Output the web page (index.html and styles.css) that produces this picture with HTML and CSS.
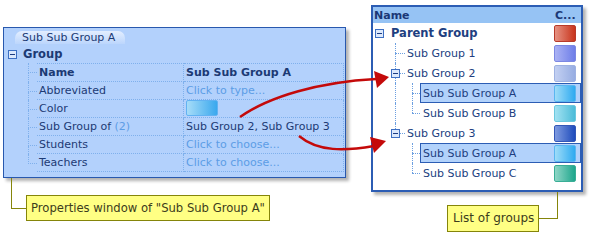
FILE: index.html
```html
<html>

<head>
    <meta http-equiv="Content-Type" content="text/html; charset=UTF-8">
    <title>Groups</title>
    <link rel="stylesheet" href="styles.css">
</head>

<body>
    <div class="page">

        <!-- properties window -->
        <div class="col-left">
            <div class="props">
                <div class="tabs"><span class="tab">Sub Sub Group A</span></div>
                <div class="group-head">
                    <svg class="exp" width="9" height="9"><rect x="0.5" y="0.5" width="8" height="8" fill="#dce9fc" stroke="#3d6fc2"/><path d="M2 4.5h5" stroke="#1c3c82"/></svg>
                    <b>Group</b>
                </div>
                <div class="grid">
                    <div class="row head">
                        <span class="branch"><i></i><i></i></span>
                        <span class="key">Name</span>
                        <span class="val">Sub Sub Group A</span>
                    </div>
                    <div class="row">
                        <span class="branch"><i></i><i></i></span>
                        <span class="key">Abbreviated</span>
                        <span class="val hint">Click to type...</span>
                    </div>
                    <div class="row">
                        <span class="branch"><i></i><i></i></span>
                        <span class="key">Color</span>
                        <span class="val"><span class="chip"></span></span>
                    </div>
                    <div class="row">
                        <span class="branch"><i></i><i></i></span>
                        <span class="key">Sub Group of <span class="hint">(2)</span></span>
                        <span class="val">Sub Group 2, Sub Group 3</span>
                    </div>
                    <div class="row">
                        <span class="branch"><i></i><i></i></span>
                        <span class="key">Students</span>
                        <span class="val hint">Click to choose...</span>
                    </div>
                    <div class="row last">
                        <span class="branch"><i></i><i></i></span>
                        <span class="key">Teachers</span>
                        <span class="val hint">Click to choose...</span>
                    </div>
                </div>
            </div>
            <div class="callout-l">
                <span class="wire-l"></span>
                <span class="note">Properties window of "Sub Sub Group A"</span>
            </div>
        </div>

        <!-- list of groups -->
        <div class="col-right">
            <div class="tree">
                <div class="tree-head"><span class="h-name">Name</span><span class="h-col">C...</span></div>

                <div class="node">
                    <span class="g g0"><svg class="exp" width="9" height="9"><rect x="0.5" y="0.5" width="8" height="8" fill="#dce9fc" stroke="#3d6fc2"/><path d="M2 4.5h5" stroke="#1c3c82"/></svg></span>
                    <span class="item l0"><b class="label">Parent Group</b><span class="sw red"></span></span>
                </div>
                <div class="node">
                    <span class="g g0"></span><span class="g g1 tee"></span>
                    <span class="item l1"><span class="label">Sub Group 1</span><span class="sw violet"></span></span>
                </div>
                <div class="node">
                    <span class="g g0"></span><span class="g g1 tee"><svg class="exp" width="9" height="9"><rect x="0.5" y="0.5" width="8" height="8" fill="#dce9fc" stroke="#3d6fc2"/><path d="M2 4.5h5" stroke="#1c3c82"/></svg></span>
                    <span class="item l1"><span class="label">Sub Group 2</span><span class="sw lilac"></span></span>
                </div>
                <div class="node">
                    <span class="g g0"></span><span class="g g1 pipe"></span><span class="g g2 tee"></span>
                    <span class="item sel"><span class="label">Sub Sub Group A</span><span class="sw sky"></span></span>
                </div>
                <div class="node">
                    <span class="g g0"></span><span class="g g1 pipe"></span><span class="g g2 ell"></span>
                    <span class="item"><span class="label">Sub Sub Group B</span><span class="sw cyan"></span></span>
                </div>
                <div class="node">
                    <span class="g g0"></span><span class="g g1 ell"><svg class="exp" width="9" height="9"><rect x="0.5" y="0.5" width="8" height="8" fill="#dce9fc" stroke="#3d6fc2"/><path d="M2 4.5h5" stroke="#1c3c82"/></svg></span>
                    <span class="item l1"><span class="label">Sub Group 3</span><span class="sw blue"></span></span>
                </div>
                <div class="node">
                    <span class="g g0"></span><span class="g g1"></span><span class="g g2 tee"></span>
                    <span class="item sel"><span class="label">Sub Sub Group A</span><span class="sw sky"></span></span>
                </div>
                <div class="node">
                    <span class="g g0"></span><span class="g g1"></span><span class="g g2 ell"></span>
                    <span class="item"><span class="label">Sub Sub Group C</span><span class="sw teal"></span></span>
                </div>
            </div>
            <div class="callout-r">
                <span class="note small">List of groups</span>
                <span class="wire-r"></span>
            </div>
        </div>

        <!-- arrows over both windows -->
        <svg class="arrows" width="590" height="250">
            <path d="M240 117 C270 96 320 82 376 79" fill="none" stroke="#c40a0a" stroke-width="2.4"/>
            <polygon points="389,77 374,71 377,88" fill="#c40a0a"/>
            <path d="M299 136 C318 152 345 151 374 146" fill="none" stroke="#c40a0a" stroke-width="2.4"/>
            <polygon points="386,141 370,137 374,153" fill="#c40a0a"/>
        </svg>
    </div>
</body>

</html>
```

FILE: styles.css
```css
* {
    margin: 0;
    padding: 0;
    box-sizing: border-box;
}

body {
    background: #fff;
    font-family: "DejaVu Sans", Verdana, sans-serif;
    font-size: 11px;
    color: #1c3a74;
}

.page {
    position: relative;
    display: flex;
    align-items: flex-start;
    padding-left: 3px;
    width: 590px;
    height: 250px;
}

/* properties window */
.col-left {
    width: 343px;
    margin-top: 27px;
}

.props {
    height: 151px;
    border: 1px solid #2858ae;
    background: #b3d1fc;
    box-shadow: 3px 3px 3px rgba(0, 0, 0, 0.3);
}

.tabs {
    height: 17px;
    padding: 3px 0 0 11px;
}

.tab {
    display: inline-block;
    height: 13px;
    line-height: 13px;
    padding: 0 10px 0 7px;
    border-radius: 7px 7px 0 0;
    background: linear-gradient(#e3eeff, #bcd6fc);
}

.group-head {
    height: 18px;
    display: flex;
    align-items: center;
    padding-left: 4px;
    gap: 6px;
    font-size: 11.5px;
}

.exp {
    display: block;
    flex: none;
}

.grid {
    margin-left: 24px;
}

.row {
    display: flex;
    height: 18px;
}

.row.head {
    height: 19px;
}

.row.head .key,
.row.head .val {
    border-top: 1px dotted #7fb0ec;
    font-weight: bold;
}

.branch {
    width: 9px;
    display: flex;
    flex-direction: column;
}

.branch i {
    flex: 1;
    border-left: 1px dotted #7fb0ec;
}

.branch i:first-child {
    border-bottom: 1px dotted #7fb0ec;
}

.row.last .branch i:last-child {
    border-left: none;
}

.key,
.val {
    display: block;
    line-height: 17px;
    border-bottom: 1px dotted #7fb0ec;
    border-right: 1px dotted #7fb0ec;
    white-space: nowrap;
}

.key {
    width: 147px;
    padding-left: 2px;
}

.val {
    width: 160px;
    padding-left: 2px;
}

.hint {
    color: #5c9de6;
}

.chip {
    display: block;
    width: 32px;
    height: 16px;
    border: 1px solid #62b2f2;
    border-radius: 2px;
    background: linear-gradient(90deg, #a6dcf8, #3aa8ee);
}

.callout-l {
    display: flex;
    align-items: flex-start;
    margin-left: 8px;
}

.wire-l {
    width: 15px;
    height: 31px;
    border-left: 1px solid #85850a;
    border-bottom: 1px solid #85850a;
}

.note {
    margin-top: 17px;
    height: 26px;
    line-height: 24px;
    padding: 0 4px;
    border: 1px solid #85850a;
    background: #ffff84;
    color: #3c3c1c;
    font-size: 11.6px;
    white-space: nowrap;
}

/* list of groups */
.col-right {
    width: 212px;
    margin-left: 25px;
    margin-top: 5px;
}

.tree {
    height: 187px;
    border: 2px solid #2c5db4;
    background: #fff;
    box-shadow: 3px 3px 3px rgba(0, 0, 0, 0.3);
    color: #203e80;
}

.tree-head {
    height: 16px;
    display: flex;
    align-items: center;
    background: #96c3f4;
    font-weight: bold;
    color: #1b3876;
}

.h-name {
    flex: 1;
    padding-left: 1px;
}

.h-col {
    width: 27px;
    padding-left: 1px;
}

.node {
    display: flex;
    height: 20px;
}

.g {
    position: relative;
    flex: none;
    display: flex;
    align-items: center;
}

.g0 {
    width: 14px;
    padding-left: 2px;
}

.g1 {
    width: 16px;
    padding-left: 4px;
}

.g2 {
    width: 17px;
}

.g .exp {
    position: relative;
    z-index: 1;
}

/* dotted tree lines */
.g.pipe::before,
.g.tee::before,
.g.ell::before {
    content: "";
    position: absolute;
    top: 0;
    bottom: 0;
    left: 8px;
    border-left: 1px dotted #6c9fe0;
}

.g.ell::before {
    bottom: 10px;
}

.g.tee::after,
.g.ell::after {
    content: "";
    position: absolute;
    top: 10px;
    left: 8px;
    right: -2px;
    border-top: 1px dotted #6c9fe0;
}

.g2.pipe::before,
.g2.tee::before,
.g2.ell::before,
.g2.tee::after,
.g2.ell::after {
    left: 9px;
}

.g2.tee::after,
.g2.ell::after {
    right: 0;
}

.item {
    flex: 1;
    display: flex;
    align-items: center;
    border: 1px solid transparent;
    padding: 0 4px 0 2px;
}

.item.l0 {
    padding-left: 3px;
}

.item.l1 {
    padding-left: 3px;
}

.item.sel {
    background: #b2d2fb;
    border-color: #2c5db4;
}

.label {
    flex: 1;
    white-space: nowrap;
}

b.label {
    font-size: 11.5px;
}

.sw {
    width: 22px;
    height: 17px;
    border-radius: 2px;
}

.red { background: linear-gradient(90deg, #e69282, #c8341c); border: 1px solid #b83a2a; }
.violet { background: linear-gradient(90deg, #aab2f4, #6e7ee8); border: 1px solid #7c88e2; }
.lilac { background: linear-gradient(90deg, #c3d0f2, #97ade2); border: 1px solid #9fb2e2; }
.sky { background: linear-gradient(90deg, #9edcf8, #2eaaf0); border: 1px solid #5ab6f0; }
.cyan { background: linear-gradient(90deg, #a2e2f2, #4cbcd8); border: 1px solid #6cc8de; }
.blue { background: linear-gradient(90deg, #7e9ae0, #1f4cbc); border: 1px solid #3458b8; }
.teal { background: linear-gradient(90deg, #8ed6c6, #1ea68c); border: 1px solid #3aae96; }

.callout-r {
    display: flex;
    align-items: flex-start;
    margin-left: 76px;
}

.note.small {
    margin-top: 13px;
    height: 27px;
    line-height: 25px;
    padding: 0 4px 0 5px;
    font-size: 12px;
}

.wire-r {
    width: 19px;
    height: 27px;
    border-right: 1px solid #85850a;
    border-bottom: 1px solid #85850a;
}

.arrows {
    position: absolute;
    left: 0;
    top: 0;
    pointer-events: none;
}
```
